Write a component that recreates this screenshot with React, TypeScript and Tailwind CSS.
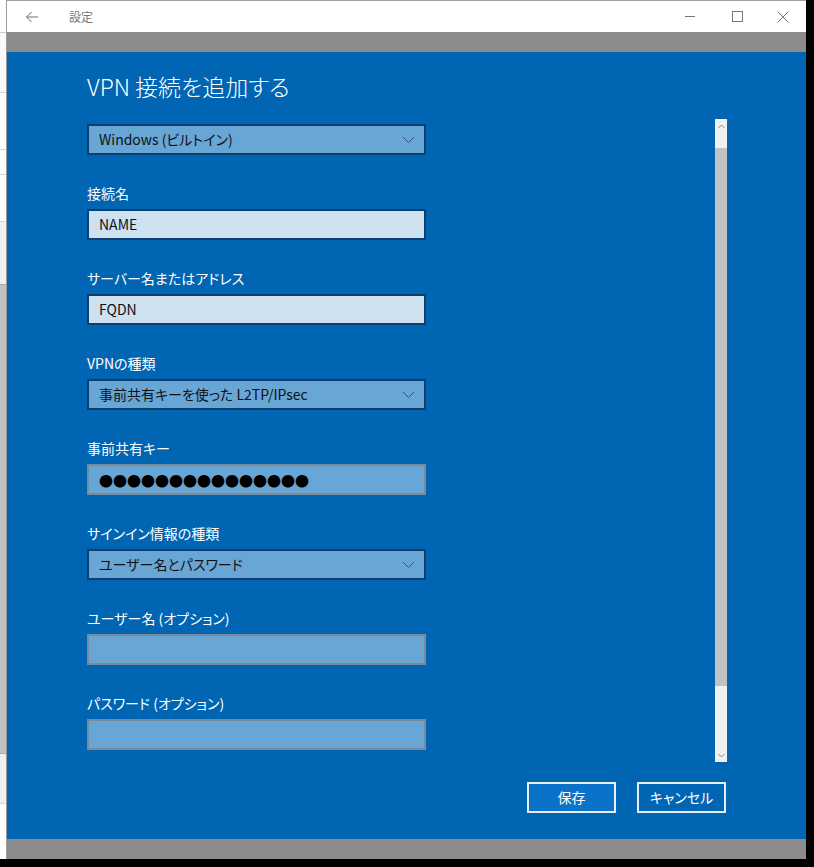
import React from "react";

const font = {
  fontFamily: '"Noto Sans CJK JP", "Noto Sans", sans-serif',
};

function Chevron() {
  return (
    <svg width="13" height="8" viewBox="0 0 13 8" className="shrink-0">
      <polyline points="1,1 6.5,6.5 12,1" fill="none" stroke="#33567a" strokeWidth="1" />
    </svg>
  );
}

function Select({ value }: { value: string }) {
  return (
    <div className="flex h-[31px] w-[339px] items-center justify-between border-2 border-[#0d3f6e] bg-[#68a6d6] pl-[10px] pr-[9px] text-[14px] text-[#111]">
      <span>{value}</span>
      <Chevron />
    </div>
  );
}

function Input({ value, light, mask }: { value?: string; light?: boolean; mask?: boolean }) {
  return (
    <div
      className={
        light
          ? "flex h-[31px] w-[339px] items-center border-2 border-[#0d3f6e] bg-[#cde1f1] pl-[10px] text-[14px] text-[#111]"
          : "flex h-[31px] w-[339px] items-center border-2 border-[#7b8a99] bg-[#68a6d6] pl-[10px] text-[14px] text-[#111]"
      }
    >
      {mask ? (
        <span className="text-[14px] leading-none tracking-[0px] text-black [font-feature-settings:'normal']">
          ●●●●●●●●●●●●●●●
        </span>
      ) : (
        <span>{value}</span>
      )}
    </div>
  );
}

function Label({ text }: { text: string }) {
  return <div className="mt-[28px] mb-[6px] h-[20px] text-[14px] leading-[20px] text-white">{text}</div>;
}

export default function App() {
  return (
    <div className="flex h-[867px] w-[814px] bg-black [font-feature-settings:'palt']" style={font}>
      {/* background window strip */}
      <div className="flex h-[859px] w-[7px] flex-col border-r border-[#9a9a9a] bg-[#f3f3f3]">
        <div className="h-[33px] border-b border-[#cfcfcf] bg-white" />
        <div className="h-[60px] border-b border-[#d8d8d8] bg-[#fafafa]" />
        <div className="h-[57px] border-b border-[#d8d8d8] bg-white" />
        <div className="h-[25px] border-b border-[#d8d8d8] bg-white" />
        <div className="h-[47px] border-b border-[#d8d8d8] bg-white" />
        <div className="h-[62px] bg-[#f0f0f0]" />
        <div className="h-[470px] border-y border-[#a8a8a8] bg-[#c2c2c2]" />
        <div className="h-[50px] border-b border-[#d8d8d8] bg-[#f0f0f0]" />
        <div className="flex-1 bg-white" />
      </div>

      {/* settings window */}
      <div className="flex h-[859px] w-[799px] flex-col">
        {/* title bar */}
        <div className="flex h-[32px] items-center border-t border-[#a0a0a0] bg-white text-[#777]">
          <svg width="14" height="12" viewBox="0 0 14 12" className="ml-[18px]">
            <path d="M13 6H1.5M6.5 1L1.5 6l5 5" fill="none" stroke="#6a6a6a" strokeWidth="1" />
          </svg>
          <span className="ml-[30px] text-[12px]">設定</span>
          <div className="ml-auto flex items-center">
            <svg width="11" height="11" viewBox="0 0 11 11" className="mr-[36px]">
              <path d="M0 5.5h10" stroke="#777" strokeWidth="1" />
            </svg>
            <svg width="11" height="11" viewBox="0 0 11 11" className="mr-[34px]">
              <rect x="0.5" y="0.5" width="10" height="10" fill="none" stroke="#777" strokeWidth="1" />
            </svg>
            <svg width="12" height="12" viewBox="0 0 12 12" className="mr-[17px]">
              <path d="M0.5 0.5l11 11M11.5 0.5l-11 11" stroke="#777" strokeWidth="1" />
            </svg>
          </div>
        </div>
        <div className="h-[20px] bg-[#8c8c8c]" />

        {/* blue content */}
        <div className="flex h-[787px] flex-col bg-[#0065b3]">
          <div className="mt-[19px] h-[30px] pl-[80px] text-[23px] font-light leading-[30px] text-white">
            VPN 接続を追加する
          </div>
          <div className="mt-[18px] flex h-[643px] justify-between pl-[80px] pr-[79px]">
            <div className="flex flex-col pt-[5px]">
              <Select value="Windows (ビルトイン)" />
              <Label text="接続名" />
              <Input value="NAME" light />
              <Label text="サーバー名またはアドレス" />
              <Input value="FQDN" light />
              <Label text="VPNの種類" />
              <Select value="事前共有キーを使った L2TP/IPsec" />
              <Label text="事前共有キー" />
              <Input mask />
              <Label text="サインイン情報の種類" />
              <Select value="ユーザー名とパスワード" />
              <Label text="ユーザー名 (オプション)" />
              <Input value="" />
              <Label text="パスワード (オプション)" />
              <Input value="" />
            </div>
            {/* scrollbar */}
            <div className="flex w-[12px] flex-col">
              <div className="flex h-[29px] justify-center bg-[#f0f0f0] pt-[5px]">
                <svg width="7" height="5" viewBox="0 0 7 5">
                  <polyline points="0.5,4 3.5,1 6.5,4" fill="none" stroke="#8a8a8a" strokeWidth="1" />
                </svg>
              </div>
              <div className="h-[538px] bg-[#c2c2c2]" />
              <div className="flex flex-1 items-end justify-center bg-[#f0f0f0] pb-[4px]">
                <svg width="7" height="5" viewBox="0 0 7 5">
                  <polyline points="0.5,1 3.5,4 6.5,1" fill="none" stroke="#8a8a8a" strokeWidth="1" />
                </svg>
              </div>
            </div>
          </div>
          <div className="mt-[20px] flex justify-end gap-[21px] pr-[80px]">
            <button className="h-[31px] w-[89px] border-2 border-[#e6eef7] bg-[#0a72c8] text-[14px] text-white">
              保存
            </button>
            <button className="h-[31px] w-[89px] border-2 border-[#e6eef7] bg-[#0065b3] text-[14px] text-white">
              キャンセル
            </button>
          </div>
        </div>
        <div className="h-[20px] bg-[#8c8c8c]" />
      </div>
      <div className="w-[8px]" />
    </div>
  );
}
